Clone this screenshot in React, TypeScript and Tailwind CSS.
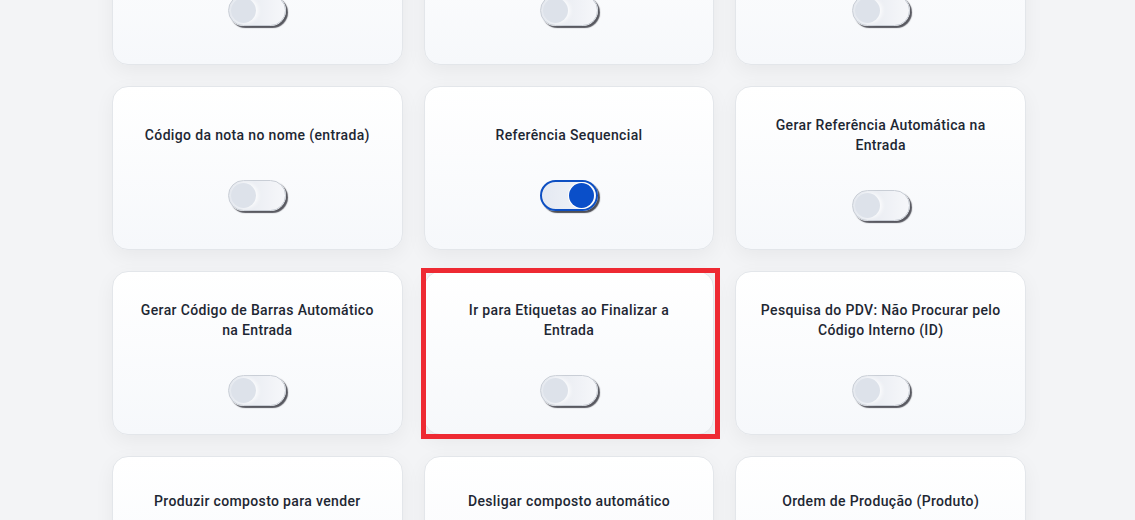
import React from "react";

type Item = { label: string; on?: boolean; highlight?: boolean };

const rows: Item[][] = [
  [{ label: "" }, { label: "" }, { label: "" }],
  [
    { label: "Código da nota no nome (entrada)" },
    { label: "Referência Sequencial", on: true },
    { label: "Gerar Referência Automática na Entrada" },
  ],
  [
    { label: "Gerar Código de Barras Automático na Entrada" },
    { label: "Ir para Etiquetas ao Finalizar a Entrada", highlight: true },
    { label: "Pesquisa do PDV: Não Procurar pelo Código Interno (ID)" },
  ],
  [
    { label: "Produzir composto para vender" },
    { label: "Desligar composto automático" },
    { label: "Ordem de Produção (Produto)" },
  ],
];

function Toggle({ on }: { on?: boolean }) {
  if (on) {
    return (
      <div className="flex h-[31px] w-[58px] items-center justify-end rounded-full border-2 border-[#0d4fc2] bg-gradient-to-r from-[#e4e9f2] to-[#f3f5f9] pr-[2px] shadow-[2px_2px_1px_rgba(20,20,30,0.75)]">
        <div className="h-[25px] w-[25px] rounded-full bg-[#0a4fc9] ring-1 ring-white" />
      </div>
    );
  }
  return (
    <div className="flex h-[31px] w-[58px] items-center justify-start rounded-full border border-[#c9ced6] bg-gradient-to-r from-[#e3e7ee] to-[#f6f7fa] pl-[2px] shadow-[2px_2px_1px_rgba(20,20,30,0.7)]">
      <div className="h-[25px] w-[25px] rounded-full bg-[#dde2ea] shadow-[2px_0_4px_rgba(255,255,255,0.9)]" />
    </div>
  );
}

function Card({ item, last, first }: { item: Item; last?: boolean; first?: boolean }) {
  return (
    <div className="relative">
      <div
        className={
          "flex h-[164px] flex-col items-center justify-center rounded-2xl border border-[#e3e6ea] bg-gradient-to-b from-white to-[#f6f8fb] px-6 shadow-[0_6px_20px_rgba(0,0,0,0.05)] " +
          (last ? "pb-[8px]" : "")
        }
      >
        {first ? (
          <div className="h-5" />
        ) : (
          <p className="text-center text-[14px] font-medium leading-5 tracking-[0.35px] text-[#1e2733]">
            {item.label}
          </p>
        )}
        <div className="mt-[35px]">
          <Toggle on={item.on} />
        </div>
      </div>
      {item.highlight && (
        <div className="pointer-events-none absolute -bottom-[4px] -left-[3px] -right-[6px] -top-[3px] border-[5px] border-[#ee2a33]" />
      )}
    </div>
  );
}

export default function App() {
  return (
    <div
      className="h-[520px] w-full overflow-hidden bg-[#f3f4f6]"
      style={{ fontFamily: "Roboto, 'Noto Sans', sans-serif" }}
    >
      <div className="ml-[112px] mt-[-99px] grid w-[914px] grid-cols-3 gap-x-[21px] gap-y-[21px]">
        {rows.map((row, ri) =>
          row.map((item, ci) => (
            <Card key={ri + "-" + ci} item={item} last={ri === 3} first={ri === 0} />
          ))
        )}
      </div>
    </div>
  );
}
